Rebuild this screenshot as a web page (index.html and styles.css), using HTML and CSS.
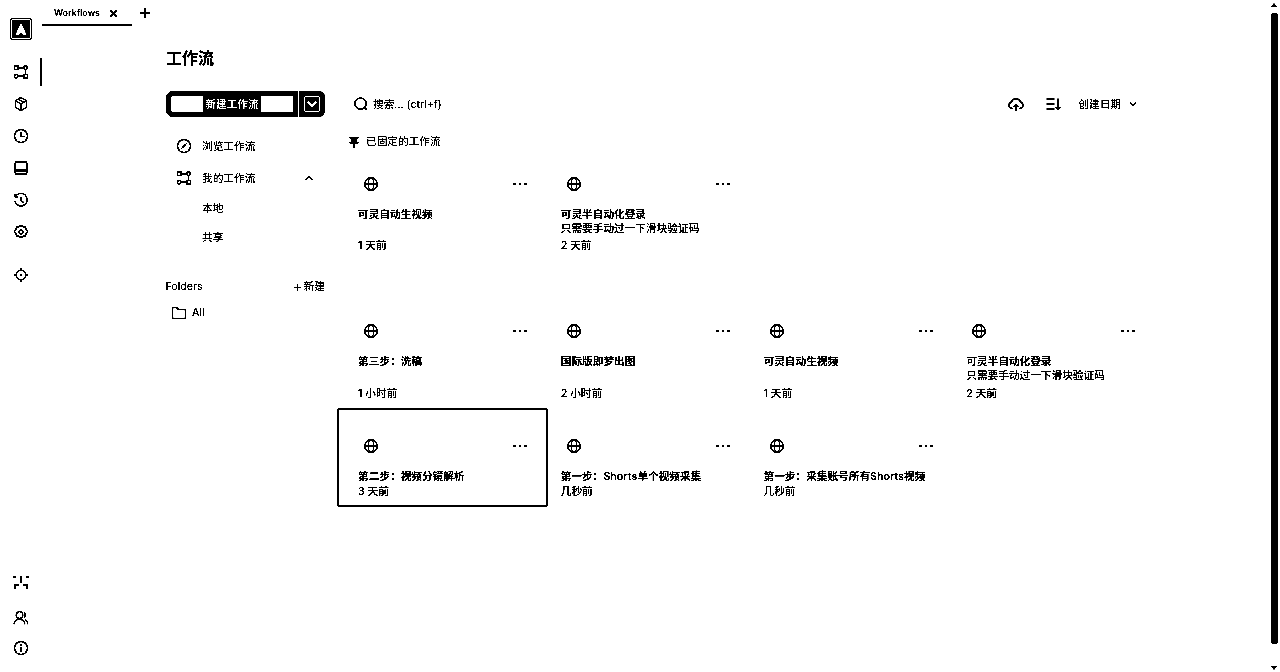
FILE: index.html
```html
<!DOCTYPE html>
<html lang="zh-CN">
<head>
<meta charset="utf-8">
<title>工作流</title>
<link rel="stylesheet" href="styles.css">
</head>
<body>
<svg class="defs" width="0" height="0">
  <symbol id="i-globe" viewBox="0 0 16 16"><circle cx="8" cy="8" r="6.300" stroke-width="1.200"/><path d="M1.800 8h12.400" stroke-width="1"/><ellipse cx="8" cy="8" rx="2.700" ry="6.300" stroke-width="1"/></symbol>
  <symbol id="i-dots" viewBox="0 0 16 16"><path class="solid" d="M1.500 7h2.200v2.200H1.500zM6.900 7h2.200v2.200H6.900zM12.300 7h2.200v2.200h-2.200z"/></symbol>
  <symbol id="i-flow" viewBox="0 0 16 16"><rect x="1.500" y="2" width="3.500" height="3.500"/><circle cx="12.500" cy="3.800" r="1.800"/><circle cx="3.300" cy="12.200" r="1.800"/><rect x="11" y="10.500" width="3.500" height="3.500"/><path d="M5 3.800h5.700M5.100 12.200H11M12.500 5.600v4.900"/></symbol>
</svg>
<div class="app">
  <nav class="rail">
    <div class="logo"><div class="logo-in"><svg viewBox="0 0 16 16"><path class="solid-w" d="M8 1.500l6 13H10.500L8 11.500 5.500 14.500H2z"/></svg></div></div>
    <div class="rail-top">
      <a class="rail-btn active"><svg viewBox="0 0 16 16"><use href="#i-flow"/></svg></a>
      <a class="rail-btn"><svg viewBox="0 0 16 16"><path d="M8 1.500l5.500 3.200v6.600L8 14.500l-5.500-3.200V4.700zM2.500 4.700L8 8l5.500-3.300M8 8v6.500M5.200 3.100l5.600 3.300"/></svg></a>
      <a class="rail-btn"><svg viewBox="0 0 16 16"><circle cx="8" cy="8" r="6.500"/><path d="M8 4v4.300h3.500"/></svg></a>
      <a class="rail-btn"><svg viewBox="0 0 16 16"><rect x="2.200" y="2" width="11.600" height="12" rx="1"/><path d="M2.200 10.500h11.600" stroke-width="2"/></svg></a>
      <a class="rail-btn"><svg viewBox="0 0 16 16"><path d="M2.400 4.600A6.300 6.300 0 1 1 1.800 9M2 1.800v3h3M8 4.500v4l2.600 2"/></svg></a>
      <a class="rail-btn"><svg viewBox="0 0 16 16"><path d="M8 1.300l2 1.500 2.500.2.600 2.400 1.600 2-1.600 2.200-.6 2.400-2.500.2-2 1.500-2-1.500-2.500-.2-.6-2.400-1.600-2.200 1.600-2 .6-2.400 2.500-.2z"/><circle cx="8" cy="8" r="2"/></svg></a>
      <a class="rail-btn rail-gap"><svg viewBox="0 0 16 16"><circle cx="8" cy="8" r="4.800"/><circle class="solid" cx="8" cy="8" r="1.200"/><path d="M8 .8v2.400M8 12.800v2.400M.8 8h2.400M12.800 8h2.400"/></svg></a>
    </div>
    <div class="rail-bottom">
      <a class="rail-btn"><svg viewBox="0 0 16 16"><path d="M1.500 4V2.200M14.500 4V2.200M8 2v7" stroke-width="2.200"/><path d="M2 14.500V11h3.500M14 14.500V11h-3.500" stroke-width="2"/></svg></a>
      <a class="rail-btn rail-user"><svg viewBox="0 0 16 16"><circle cx="6.500" cy="5" r="3.300"/><path d="M1 14.500c.4-3.300 2.500-5.200 5.500-5.200s5 1.900 5.500 5.200M10.800 2.200a3.300 3.300 0 0 1 0 5.400M12.300 9.800c1.500.9 2.400 2.500 2.700 4.700"/></svg></a>
      <a class="rail-btn"><svg viewBox="0 0 16 16"><circle cx="8" cy="8" r="6.500"/><path d="M8 7v4.500M8 4.300v1.400" stroke-width="2"/></svg></a>
    </div>
  </nav>

  <div class="workspace">
    <header class="tabs">
      <div class="tab">
        <span>Workflows</span>
        <svg class="tab-close" viewBox="0 0 10 10"><path d="M1.500 1.500l7 7M8.500 1.500l-7 7" stroke-width="1.800"/></svg>
      </div>
      <svg class="tab-add" viewBox="0 0 12 12"><path d="M6 .8v10.400M.8 6h10.400" stroke-width="1.800"/></svg>
    </header>

    <main class="main">
      <h1 class="page-title">工作流</h1>
      <div class="columns">
        <aside class="side">
          <div class="new-row">
            <button class="new-btn"><span>新建工作流</span></button>
            <button class="new-more"><svg viewBox="0 0 12 12"><path d="M2.500 4l3.500 3.500L9.500 4" stroke-width="2"/></svg></button>
          </div>
          <a class="side-item first"><svg viewBox="0 0 16 16"><circle cx="8" cy="8" r="6.500"/><path class="solid" d="M11 5L9 9 5 11l2-4z"/></svg>浏览工作流</a>
          <a class="side-item"><svg viewBox="0 0 16 16"><use href="#i-flow"/></svg>我的工作流<svg class="side-chev" viewBox="0 0 12 12"><path d="M2.500 8L6 4.500 9.500 8" stroke-width="1.600"/></svg></a>
          <a class="side-sub">本地</a>
          <a class="side-sub">共享</a>
          <div class="folders-head">
            <span>Folders</span>
            <a class="folder-new"><svg viewBox="0 0 10 10"><path d="M5 1v8M1 5h8"/></svg>新建</a>
          </div>
          <a class="folder"><svg viewBox="0 0 16 16"><path d="M1.500 13.500v-11h4.300l1.500 2h7.200v9z"/></svg>All</a>
        </aside>

        <section class="content">
          <div class="toolbar">
            <div class="search">
              <svg viewBox="0 0 16 16"><circle cx="7.500" cy="7.500" r="5.700"/><path d="M12 12l2 2"/></svg>
              <span>搜索... (ctrl+f)</span>
            </div>
            <svg class="tool-cloud" viewBox="0 0 16 16"><path d="M4.500 12.500H4A3.300 3.300 0 0 1 3.600 6 4.600 4.600 0 0 1 12.400 6a3.300 3.300 0 0 1-.4 6.500h-.5M8 14.800V8.500M5.600 10.600L8 8.300l2.400 2.300"/></svg>
            <svg class="tool-sort" viewBox="0 0 16 16"><path d="M1.500 3h8M1.500 8h8M1.500 13h8M13 2.500v11M10.800 11.300l2.200 2.400 2.200-2.400" stroke-width="1.500"/></svg>
            <span class="sort-label">创建日期</span>
            <svg class="sort-chev" viewBox="0 0 10 10"><path d="M2 3.500L5 6.500l3-3" stroke-width="1.500"/></svg>
          </div>

          <div class="pin-label"><svg viewBox="0 0 12 12"><path class="solid" d="M1.500 1h9v1.500H9v3.500h1.500v1.500h-3.700V12H5.200V7.500H1.500V6H3V2.500H1.500z"/></svg>已固定的工作流</div>

          <div class="grid pinned">
            <article class="card">
              <div class="card-head"><svg><use href="#i-globe"/></svg><svg><use href="#i-dots"/></svg></div>
              <div class="card-title">可灵自动生视频</div>
              <div class="card-time">1 天前</div>
            </article>
            <article class="card">
              <div class="card-head"><svg><use href="#i-globe"/></svg><svg><use href="#i-dots"/></svg></div>
              <div class="card-title">可灵半自动化登录</div>
              <div class="card-desc">只需要手动过一下滑块验证码</div>
              <div class="card-time">2 天前</div>
            </article>
          </div>

          <div class="grid all">
            <article class="card">
              <div class="card-head"><svg><use href="#i-globe"/></svg><svg><use href="#i-dots"/></svg></div>
              <div class="card-title">第三步：洗稿</div>
              <div class="card-time">1 小时前</div>
            </article>
            <article class="card">
              <div class="card-head"><svg><use href="#i-globe"/></svg><svg><use href="#i-dots"/></svg></div>
              <div class="card-title">国际版即梦出图</div>
              <div class="card-time">2 小时前</div>
            </article>
            <article class="card">
              <div class="card-head"><svg><use href="#i-globe"/></svg><svg><use href="#i-dots"/></svg></div>
              <div class="card-title">可灵自动生视频</div>
              <div class="card-time">1 天前</div>
            </article>
            <article class="card">
              <div class="card-head"><svg><use href="#i-globe"/></svg><svg><use href="#i-dots"/></svg></div>
              <div class="card-title">可灵半自动化登录</div>
              <div class="card-desc">只需要手动过一下滑块验证码</div>
              <div class="card-time">2 天前</div>
            </article>
            <article class="card selected">
              <div class="card-head"><svg><use href="#i-globe"/></svg><svg><use href="#i-dots"/></svg></div>
              <div class="card-title">第二步：视频分镜解析</div>
              <div class="card-time">3 天前</div>
            </article>
            <article class="card">
              <div class="card-head"><svg><use href="#i-globe"/></svg><svg><use href="#i-dots"/></svg></div>
              <div class="card-title">第一步：Shorts单个视频采集</div>
              <div class="card-time">几秒前</div>
            </article>
            <article class="card">
              <div class="card-head"><svg><use href="#i-globe"/></svg><svg><use href="#i-dots"/></svg></div>
              <div class="card-title">第一步：采集账号所有Shorts视频</div>
              <div class="card-time">几秒前</div>
            </article>
          </div>
        </section>
      </div>
    </main>
  </div>

  <div class="scroll">
    <i class="scroll-up"></i>
    <i class="scroll-thumb"></i>
    <i class="scroll-down"></i>
  </div>
</div>
</body>
</html>
```

FILE: styles.css
```css
html,body{margin:0;height:100%;background:#fff;overflow:hidden;}
body{font-family:"Inter","Noto Sans CJK SC",sans-serif;font-size:10.67px;line-height:14px;color:#000;filter:grayscale(1) brightness(.8) contrast(20);}
svg{fill:none;stroke:#000;stroke-width:1.3;display:block;}
.solid{fill:#000;stroke:none;}
.solid-w{fill:#fff;stroke:none;}
.defs{position:absolute;}
a{color:inherit;text-decoration:none;}
button{font:inherit;padding:0;margin:0;}

.app{display:flex;height:672px;}

/* left rail */
.rail{width:42px;flex:none;display:flex;flex-direction:column;box-sizing:border-box;padding-top:18px;height:672px;}
.logo{width:22px;height:22px;margin-left:10px;background:#000;border-radius:3px;box-sizing:border-box;padding:1px;}
.logo-in{height:100%;box-sizing:border-box;border:1px solid #fff;border-radius:2px;background:#000;padding:1px;}
.logo-in svg{width:16px;height:16px;}
.rail-top{margin-top:16px;flex:1;}
.rail-btn{display:flex;height:32px;align-items:center;padding-left:13px;position:relative;box-sizing:border-box;}
.rail-btn svg{width:16px;height:16px;}
.rail-btn.active::after{content:"";position:absolute;right:0;top:2px;width:2.500px;height:28px;background:#000;border-radius:1px;}
.rail-gap{margin-top:11px;}
.rail-bottom{padding-bottom:8px;}
.rail-bottom .rail-btn{height:33px;}
.rail-bottom .rail-user{padding-top:6px;}

/* tabs */
.workspace{flex:1;min-width:0;}
.tabs{height:26px;display:flex;align-items:flex-start;}
.tab{width:90px;height:26px;box-sizing:border-box;border-bottom:2px solid #000;display:flex;align-items:center;padding:2px 0 0 12px;font-size:9px;font-weight:500;}
.tab-close{width:9px;height:9px;margin-left:9px;}
.tab-add{width:12px;height:12px;margin:7px 0 0 7px;}

/* main */
.main{padding:20px 0 0 124px;}
.page-title{margin:0;font-size:16px;line-height:24px;font-weight:700;}
.columns{display:flex;gap:12px;margin-top:21px;}
.side{width:159px;flex:none;}

.new-row{display:flex;gap:1px;height:26px;}
.new-btn{width:132px;height:26px;box-sizing:border-box;border:5px solid #000;border-radius:7px 0 0 7px;background:#fff;display:flex;align-items:center;justify-content:center;}
.new-btn span{background:#000;color:#fff;padding:2px 2px 0;line-height:14px;font-weight:700;}
.new-more{width:26px;height:26px;box-sizing:border-box;background:#000;border:none;border-radius:0 6px 6px 0;display:flex;align-items:center;justify-content:center;}
.new-more svg{width:16px;height:16px;border:1.500px solid #fff;border-radius:2px;box-sizing:border-box;stroke:#fff;}

.side-item{display:flex;align-items:center;height:32px;box-sizing:border-box;padding:2px 0 0 10px;position:relative;}
.side-item.first{margin-top:13px;}
.side-item svg{width:16px;height:16px;margin:0 10px 2px 0;}
.side-item .side-chev{width:12px;height:12px;position:absolute;left:137px;top:10px;margin:0;}
.side-sub{display:flex;align-items:center;height:29px;padding-left:36px;}
.folders-head{display:flex;justify-content:space-between;align-items:center;margin-top:27px;height:16px;margin-left:-.5px;}
.folder-new{display:flex;align-items:center;gap:2px;}
.folder-new svg{width:9px;height:9px;}
.folder{display:flex;align-items:center;height:24px;margin-top:6px;padding-left:5px;gap:5px;}
.folder svg{width:16px;height:16px;}

/* toolbar */
.content{flex:1;min-width:0;}
.toolbar{display:flex;align-items:center;height:26px;width:803px;}
.search{display:flex;align-items:center;gap:4px;padding-left:16px;flex:1;}
.search svg{width:16px;height:16px;}
.search span{padding-top:2px;}
.tool-cloud{width:16px;height:16px;}
.tool-sort{width:16px;height:16px;margin-left:21px;}
.sort-label{margin-left:17px;padding-top:2px;}
.sort-chev{width:10px;height:10px;margin:0 2px 0 7px;}

.pin-label{display:flex;align-items:center;box-sizing:border-box;margin-top:17px;height:13px;padding:2px 0 0 11px;gap:6px;}
.pin-label svg{width:12px;height:12px;}

/* cards */
.grid{display:grid;grid-template-columns:repeat(4,202.75px);}
.all{margin-top:33px;}
.card{display:flex;flex-direction:column;border:2px solid transparent;padding:27px 0 6px 19px;min-width:0;}
.card.selected{border-color:#000;margin:-1px -8px 0 0;padding-top:28px;border-radius:2px;}
.card-head{display:flex;justify-content:space-between;width:165px;margin-left:5px;height:16px;margin-bottom:16px;}
.card-head svg{width:16px;height:16px;}
.card-title{font-weight:600;white-space:nowrap;}
.card-desc{margin-bottom:3px;white-space:nowrap;font-weight:500;}
.pinned .card-desc{margin-bottom:2px;}
.card-time{margin-top:auto;padding-top:1px;font-weight:500;}

/* scrollbar */
.scroll{width:8px;flex:none;display:flex;flex-direction:column;align-items:center;padding:3px 2px 2px 0;height:667px;}
.scroll-up,.scroll-down{width:0;height:0;border:3.500px solid transparent;}
.scroll-up{border-bottom:4px solid #000;border-top:0;}
.scroll-down{border-top:4px solid #000;border-bottom:0;margin-top:auto;}
.scroll-thumb{width:7px;height:631px;margin-top:6px;background:#000;border-radius:3px;}
```
